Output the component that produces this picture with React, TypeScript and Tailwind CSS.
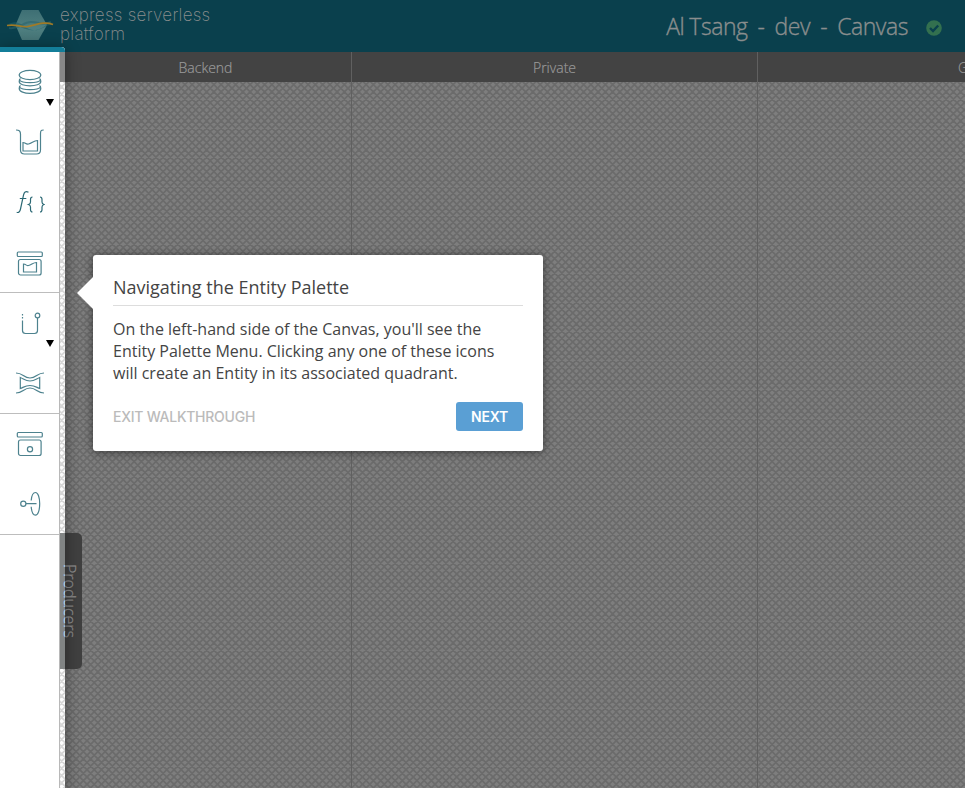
import type { ReactNode } from "react";

function Weave() {
  return (
    <svg className="absolute inset-0 h-full w-full">
      <defs>
        <pattern id="weave" width="29" height="29" patternUnits="userSpaceOnUse">
          <rect width="29" height="29" fill="#fcfcfc" />
          <path
            d="M-1 -1L30 30M6.250 -1L30 22.750M13.500 -1L30 15.500M20.750 -1L30 8.250M28 -1L30 1M-1 6.250L22.750 30M-1 13.500L15.500 30M-1 20.750L8.250 30M-1 28L1 30M30 -1L-1 30M22.750 -1L-1 22.750M15.500 -1L-1 15.500M8.250 -1L-1 8.250M1 -1L-1 1M30 6.250L6.250 30M30 13.500L13.500 30M30 20.750L20.750 30M30 28L28 30"
            stroke="#d6d6d6"
            strokeWidth="1.700"
          />
        </pattern>
      </defs>
      <rect width="100%" height="100%" fill="url(#weave)" />
    </svg>
  );
}

function Icon({ children, dark = false }: { children: ReactNode; dark?: boolean }) {
  return (
    <svg width="30" height="30" viewBox="0.5 0 30 30" fill="none" stroke={dark ? "#2b6874" : "#4d828e"} strokeWidth="1.2">
      {children}
    </svg>
  );
}

function Row({ children, arrow = false, line = false }: { children: ReactNode; arrow?: boolean; line?: boolean }) {
  return (
    <div className={`relative flex shrink-0 items-center justify-center ${line ? "h-[61px] border-b border-[#bdbdbd]" : "h-[60px]"}`}>
      {children}
      {arrow && (
        <span className="absolute right-[5px] top-[47px] h-0 w-0 border-x-4 border-t-[7px] border-x-transparent border-t-black" />
      )}
    </div>
  );
}

function Palette() {
  return (
    <nav className="flex h-full w-[60px] flex-col border-r border-[#b8b8b8] bg-white">
      <Row arrow>
        <Icon>
          <ellipse cx="15.500" cy="8" rx="10.800" ry="4.700" />
          <path d="M6 11.500c-1.300.8-1.300 1.500-1.300 3 0 5.800 21.600 5.800 21.600 0 0-1.500 0-2.200-1.300-3M4.900 13c2.500 3.600 18.700 3.600 21.200 0" />
          <path d="M6 18.500c-1.300.8-1.300 1.500-1.300 3 0 6.500 21.600 6.500 21.600 0 0-1.500 0-2.200-1.300-3M4.900 20c2.500 3.600 18.700 3.600 21.200 0" />
        </Icon>
      </Row>
      <Row>
        <Icon>
          <path d="M1.500 3c3.500 0 4.500 1.200 4.500 4v16q0 4 4 4h12q4 0 4-4V7c0-2.800 0-4 3.200-4M8.500 15.500c2.500 0 2.500 2 5.500 1.500 3.500-.5 5-3.500 9-3.500v10.500H8.500z" />
        </Icon>
      </Row>
      <Row>
        <Icon dark>
          <path d="M14 5.200c-3-1.500-4.300-.2-5 3L6 22c-.6 3-2 4-3.800 3.300M5.300 11.500h6.500M18 10c-1.800 0-2 .8-2 2.500v2.500c0 1.500-.5 2-2 2.500 1.500.5 2 1 2 2.500v2.500c0 1.700.2 2.500 2 2.500M25.500 10c1.800 0 2 .8 2 2.500v2.500c0 1.500.5 2 2 2.500-1.500.5-2 1-2 2.500v2.500c0 1.700-.2 2.500-2 2.500" />
        </Icon>
      </Row>
      <Row line>
        <Icon>
          <rect x="2.800" y="5" width="25" height="4.500" rx="1" />
          <rect x="4" y="12.500" width="22.600" height="15.500" rx="2" />
          <path d="M9 17c3 0 2 2 5 1.500 3-.5 4.500-3 8-3v9.500H9z" />
        </Icon>
      </Row>
      <Row arrow>
        <Icon>
          <path d="M8 6v6" strokeDasharray="1.500 1.500" />
          <path d="M8 12.500v10q0 3 3 3h9q3 0 3-3V10" />
          <circle cx="23" cy="7.500" r="2.300" />
        </Icon>
      </Row>
      <Row line>
        <Icon>
          <path d="M1.500 5c7 0 7.500 5 14 5s7-5 14-5M1.500 25c7 0 7.500-5 14-5s7 5 14 5M5.800 9.500c3.700 1.500 5.200 3.500 9.700 3.500s6-2 9.700-3.500v11c-3.700-1.500-5.200-3-9.700-3s-6 1.500-9.700 3z" />
        </Icon>
      </Row>
      <Row>
        <Icon>
          <rect x="2.800" y="3.500" width="25" height="4.500" rx="1" />
          <rect x="4" y="11" width="22.600" height="15.500" rx="2" />
          <circle cx="15.500" cy="20.200" r="2.600" />
        </Icon>
      </Row>
      <Row line>
        <Icon>
          <circle cx="8.800" cy="14.700" r="2.600" />
          <path d="M11.500 14.700H22M16.700 11.500c.4-5 2-8 4.300-8 2.500 0 4.200 5 4.200 11.300s-1.700 11.400-4.200 11.400c-2.300 0-3.900-3.400-4.300-8.400" />
        </Icon>
      </Row>
    </nav>
  );
}

function Logo() {
  return (
    <svg width="50" height="34" viewBox="0 0 50 34" fill="none" className="shrink-0">
      <defs>
        <linearGradient id="hex" x1="0" y1="0" x2="0" y2="1">
          <stop stopColor="#3e6f74" />
          <stop offset=".6" stopColor="#4e7f80" />
          <stop offset="1" stopColor="#467577" />
        </linearGradient>
      </defs>
      <path d="M16 2h16.500l8.500 15-8.500 15H16L9.500 17z" fill="url(#hex)" />
      <path d="M1 17c13-9 18 7 29 5s10-9 17-5c-8-1-12 7-23 5S10 15 1 17" fill="#1d5f6b" fillOpacity=".6" />
      <path d="M3 20c11 2 13-6 22-6s12 4 20 0" stroke="#2a646c" strokeWidth="2" strokeOpacity=".6" />
      <path d="M1 17.500c10-2 13 2.500 21 1s16-5.500 25-2" stroke="#a07a26" strokeWidth="1.700" />
    </svg>
  );
}

export default function App() {
  return (
    <div className="relative flex h-[788px] w-full flex-col overflow-hidden font-['Open_Sans',sans-serif]">
      <header className="flex h-[52px] shrink-0 justify-between bg-[#0a404d] pl-[6px] text-[#8a8e8e]">
        <div className="flex gap-1 pt-2">
          <Logo />
          <div className="mt-[-2px] font-['Inter',sans-serif] text-[17px] font-extralight leading-[18.5px] tracking-[0.28px]">
            express serverless<br />platform
          </div>
        </div>
        <div className="flex items-center pr-[23px] pt-px text-[23px] font-light">
          <span className="whitespace-pre tracking-[-0.45px] [-webkit-text-stroke:0.35px] [word-spacing:-0.5px]">Al Tsang  -  dev  -  Canvas</span>
          <svg className="ml-[18px] mt-[3px]" width="16" height="16" viewBox="0 0 16 16">
            <circle cx="8" cy="8" r="7.800" fill="#33704f" />
            <path d="M4 8l3 3 5.200-5.500" stroke="#0a404d" strokeWidth="2.400" fill="none" />
          </svg>
        </div>
      </header>
      <main className="relative grid flex-1 grid-cols-[352px_406px_1fr]">
        <Weave />
        <div className="absolute inset-0 bg-black/50" />
        {["Backend", "Private", "Gateway"].map((name) => (
          <section key={name} className="relative border-r border-[#606060] last:border-r-0">
            <h2 className={`flex h-[30px] items-center bg-[#434343] pt-[2px] text-sm font-light text-[#999] [-webkit-text-stroke:0.2px] ${name === "Backend" ? "justify-center pl-[60px]" : name === "Private" ? "justify-center" : "pl-[200px]"}`}>
              {name}
            </h2>
          </section>
        ))}
      </main>

      <div className="absolute left-[60px] top-[533px] flex h-[136px] w-[22px] items-center justify-center rounded-r-[5px] bg-[#404040] text-base font-light text-[#8c8c8c] [-webkit-text-stroke:0.25px]">
        <span className="relative right-[1px] [writing-mode:vertical-rl]">Producers</span>
      </div>

      <aside className="absolute left-0 top-[47px] h-[745px] w-[65px] overflow-hidden rounded-tr bg-white shadow-[0_2px_15px_rgba(0,0,0,0.4)]">
        <Weave />
        <div className="relative flex h-full flex-col">
          <div className="h-[5px] shrink-0 bg-[#137e99]" />
          <div className="min-h-0 flex-1">
            <Palette />
          </div>
        </div>
        <div className="absolute left-[60px] top-[5px] h-[30px] w-[5px] bg-[#888]" />
        <div className="absolute left-[60px] top-[486px] flex h-[136px] w-[22px] items-center justify-center bg-[#818484] text-base font-light text-[#b5dcf5] [-webkit-text-stroke:0.25px]">
          <span className="relative right-[1px] [writing-mode:vertical-rl]">Producers</span>
        </div>
      </aside>

      <div className="absolute left-[93px] top-[255px] h-[196px] w-[450px] rounded-[3px] bg-white px-5 pt-5 text-[#444] shadow-[0_1px_10px_rgba(0,0,0,0.5)]">
        <span className="absolute -left-4 top-[22px] h-0 w-0 border-y-[16px] border-r-[16px] border-y-transparent border-r-white" />
        <h1 className="h-[31px] border-b border-[#ddd] text-[18px] leading-[25px]">Navigating the Entity Palette</h1>
        <p className="mt-3 whitespace-nowrap text-base leading-[22px]">
          On the left-hand side of the Canvas, you'll see the<br />
          Entity Palette Menu. Clicking any one of these icons<br />
          will create an Entity in its associated quadrant.
        </p>
        <div className="mt-[18px] flex items-center justify-between font-['Inter',sans-serif] text-sm font-medium tracking-[-0.26px]">
          <button className="text-[#bbb]">EXIT WALKTHROUGH</button>
          <button className="h-[29px] w-[67px] rounded-[3px] bg-[#5a9fd4] font-semibold text-white">NEXT</button>
        </div>
      </div>
    </div>
  );
}
